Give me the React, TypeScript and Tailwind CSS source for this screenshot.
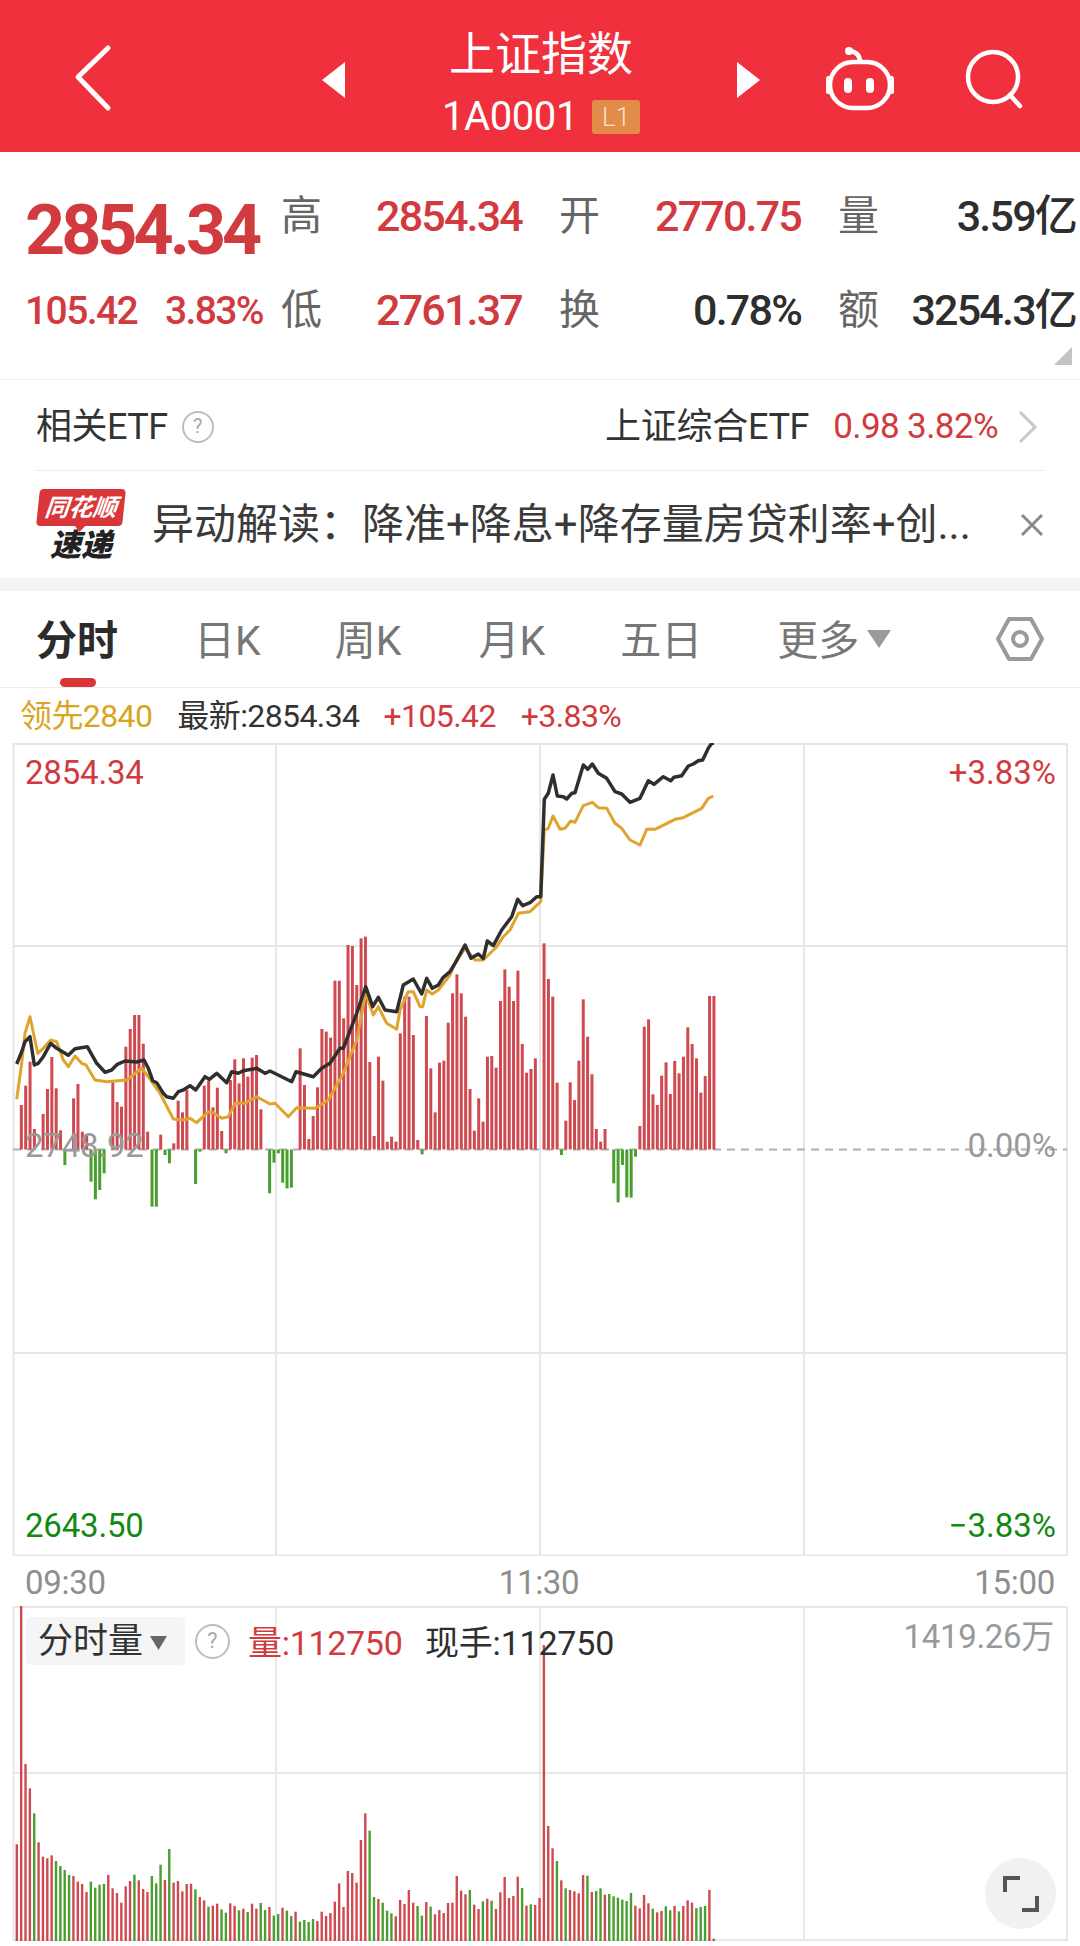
import React from "react";

const GREEN = "#4a9e30";

// bar tops, read off the reference in 3x pixels above y=740; below 1228 = red, above = green
const TICKS = [
  1095, 1037, 965, 1167, 1228, 1122, 1047, 951, 1045, 1171, 1275, 1228, 1075, 1032, 1175, 1185, 1325, 1378, 1350, 1300, 1228,
  1027, 1086, 1100, 920, 867, 825, 825, 911, 1175, 1400, 1400, 1184, 1245, 1270, 1210, 1082, 1117, 1050, 1228, 1332, 1235,
  1037, 1022, 1102, 1043, 1173, 1240, 1020, 958, 1030, 955, 1010, 953, 945, 1108, 1228, 1360, 1268, 1240, 1328, 1345, 1343,
  1228, 925, 1035, 1197, 1128, 1042, 867, 875, 893, 722, 722, 835, 615, 618, 735, 595, 590, 966, 1188, 950, 1022, 1205, 1190,
  1205, 880, 770, 770, 885, 1200, 1243, 828, 985, 1117, 968, 962, 848, 760, 703, 760, 830, 1047, 1172, 1075, 1145, 950, 948,
  983, 783, 688, 740, 783, 692, 912, 998, 987, 955, 1228, 610, 717, 770, 1028, 1245, 1142, 1027, 1080, 962, 778, 890, 1003,
  1167, 1205, 1167, 1228, 1330, 1387, 1275, 1372, 1373, 1250, 1158, 860, 838, 1063, 1095, 1007, 967, 1062, 963, 1000, 950,
  862, 912, 955, 1058, 1008, 768, 768,
];

// volume tops in 3x pixels below y=1740; g = green bar
const VOLUME = (
  "313 -405 72 145 220g 307 350 355 346 363g 378g 390g 405g 408 425 432 456 425g 443g 434g 432g 405 445 459 488 439 423 404g 421 447 456 " +
  "408g 430g 374g 420 327g 428 423 454 432 431 448g 471 481 500g 497 491 508g 518g 490 498 511g 506 516g 491 506 489g 510g 501 527g 522g " +
  "503 512g 528g 515 545g 540g 546g 537g 543 515 528 519 485 430 501 393 399 428 300 220 272g 471g 477 488g 512g 520g 529 480 492 450 488 " +
  "498g 527g 486 500g 523 510 519 489 488 408 452 463 450g 494 507 484g 476 482g 507 457 411 474 468 410 444g 497 493g 495 474 -285 258 " +
  "325 363g 421 445g 450 454 460 405 407g 456 453g 445g 464 462g 469g 473g 479g 483g 459g 497 505 465 490 506g 517 513 499g 511g 498 514g " +
  "498 481 488 504g 501g 498g 450 596"
).split(" ");

const BLACK_LINE =
  "50,972 65,935 75,905 90,890 103,975 115,970 130,950 152,910 170,925 205,946 225,926 262,920 290,970 315,997 335,990 352,973 375,963 410,966 432,960 445,985 458,1022 470,1028 490,1060 500,1070 520,1075 535,1055 550,1050 570,1037 587,1050 615,1010 628,1018 650,1000 680,1028 695,995 715,1000 730,992 770,985 795,1000 810,993 845,1010 875,1025 888,995 940,1010 965,985 990,970 1020,925 1030,925 1070,820 1097,740 1118,800 1135,772 1155,810 1190,815 1200,775 1210,735 1240,717 1265,762 1280,715 1297,745 1315,735 1330,712 1350,695 1365,670 1395,615 1413,655 1435,642 1450,655 1462,603 1480,617 1505,570 1535,530 1553,478 1568,497 1590,488 1610,470 1622,470 1633,178 1645,160 1659,105 1672,168 1690,170 1700,177 1715,160 1725,158 1750,75 1763,88 1777,72 1795,100 1820,115 1845,155 1865,162 1890,187 1920,175 1945,122 1962,133 1990,110 2012,122 2022,112 2045,107 2065,78 2080,72 2095,62 2108,60 2125,25 2135,10 2142,10";
const YELLOW_LINE =
  "50,1078 65,970 75,880 90,830 113,940 130,925 152,900 170,905 190,960 205,980 225,948 245,970 258,975 285,1020 320,1025 380,1020 425,985 445,1010 480,1060 520,1137 550,1140 570,1135 590,1148 625,1115 640,1118 665,1135 685,1130 705,1090 735,1090 770,1070 810,1092 825,1090 865,1130 890,1103 945,1105 985,1080 1030,1000 1070,900 1097,760 1120,825 1135,800 1160,850 1190,868 1200,810 1225,755 1240,755 1260,800 1268,800 1280,750 1297,762 1315,750 1350,705 1365,670 1395,625 1425,660 1450,660 1490,620 1510,590 1530,570 1555,520 1590,515 1622,485 1633,270 1645,265 1659,228 1680,268 1695,265 1712,243 1725,247 1750,197 1777,187 1795,203 1820,205 1845,250 1865,265 1890,300 1920,315 1940,268 1965,268 2025,238 2050,233 2105,205 2125,175 2140,168";

// the traced lines are in 3x pixels, same origin as TICKS
function scaled(points: string) {
  return points
    .split(" ")
    .map((p) => {
      const [x, y] = p.split(",").map(Number);
      return `${(x / 3).toFixed(1)},${(740 + y / 3).toFixed(1)}`;
    })
    .join(" ");
}

function HelpCircle({ size }: { size: number }) {
  return (
    <span
      className="flex shrink-0 items-center justify-center rounded-full border-2 border-[#bdbdbd] text-[#a8a8a8]"
      style={{ width: size, height: size, fontSize: size * 0.62 }}
    >
      ?
    </span>
  );
}

function Stat({ label, value, up }: { label: string; value: string; up?: boolean }) {
  return (
    <div className="flex items-center justify-between">
      <span className="text-[41px] leading-none text-[#666]">{label}</span>
      <span className={`text-[43px] font-medium leading-none tracking-[-1.8px] ${up ? "text-[#d13a3e]" : "text-[#2e2e2e]"}`}>
        {value}
      </span>
    </div>
  );
}

function Header() {
  return (
    <header className="relative flex h-[152px] items-center bg-[#f0303c] text-white">
      <svg width="44" height="70" viewBox="0 0 44 70" className="ml-[72px] mt-[5px] shrink-0" fill="none" stroke="currentColor" strokeWidth="5" strokeLinecap="round" strokeLinejoin="round">
        <path d="M36 4 6 33l30 31" />
      </svg>
      <svg width="24" height="36" viewBox="0 0 24 36" className="ml-[206px] mt-[8px] shrink-0" fill="currentColor">
        <path d="M23 0v36L0 18z" />
      </svg>
      <div className="flex w-[390px] shrink-0 flex-col items-center self-start pt-[27px]">
        <div className="text-[46px] leading-[54px]">上证指数</div>
        <div className="mt-[16px] flex items-center gap-[14px]">
          <span className="text-[40px] leading-[40px] tracking-[-0.4px]">1A0001</span>
          <span className="flex h-[34px] w-[48px] items-center justify-center rounded-[3px] bg-[#e18c48] text-[26px] font-light text-[#fbe3cc]">L1</span>
        </div>
      </div>
      <svg width="24" height="36" viewBox="0 0 24 36" className="mt-[8px] shrink-0" fill="currentColor">
        <path d="M1 0v36l23-18z" />
      </svg>
      <svg width="72" height="66" viewBox="0 0 72 66" className="ml-[64px] mt-[4px] shrink-0" fill="none" stroke="currentColor" strokeWidth="4.5" strokeLinecap="round">
        <rect x="6" y="17" width="60" height="46" rx="23" />
        <path d="M36 17c0-6-3-10-10-11" />
        <circle cx="25" cy="6" r="4" fill="currentColor" stroke="none" />
        <rect x="2" y="31" width="5" height="18" rx="2.5" fill="currentColor" stroke="none" />
        <rect x="65" y="31" width="5" height="18" rx="2.5" fill="currentColor" stroke="none" />
        <rect x="20" y="33" width="8" height="15" rx="4" fill="currentColor" stroke="none" />
        <rect x="42" y="33" width="8" height="15" rx="4" fill="currentColor" stroke="none" />
      </svg>
      <svg width="60" height="60" viewBox="0 0 60 60" className="ml-[68px] mt-[5px] shrink-0" fill="none" stroke="currentColor" strokeWidth="4.5" strokeLinecap="round">
        <circle cx="29" cy="28" r="25" />
        <path d="m46 46 10 11" />
      </svg>
    </header>
  );
}

function Quote() {
  return (
    <section className="relative flex h-[228px] items-start border-b border-[#eeeeee] pt-[41px]">
      <div className="w-[281px] shrink-0 pl-[25px] text-[#d13a3e]">
        <div className="mt-[2px] text-[70px] font-bold leading-[70px] tracking-[-4px]">2854.34</div>
        <div className="mt-[27px] flex justify-between pr-[18px] text-[39px] font-medium leading-none tracking-[-1.6px]">
          <span>105.42</span>
          <span>3.83%</span>
        </div>
      </div>
      <div className="grid w-[795px] grid-cols-[241px_242px_238px] gap-x-[37px] gap-y-[51px] pt-[2px]">
        <Stat label="高" value="2854.34" up />
        <Stat label="开" value="2770.75" up />
        <Stat label="量" value="3.59亿" />
        <Stat label="低" value="2761.37" up />
        <Stat label="换" value="0.78%" />
        <Stat label="额" value="3254.3亿" />
      </div>
      <svg width="18" height="18" viewBox="0 0 18 18" className="absolute bottom-[14px] right-[8px]">
        <path d="M18 0v18H0z" fill="#c4c4c4" />
      </svg>
    </section>
  );
}

function EtfRow() {
  return (
    <div className="mx-[36px] flex h-[91px] items-center border-b border-[#ececec] pt-[4px] text-[36px] text-[#333]">
      <span className="tracking-[-0.5px]">相关ETF</span>
      <span className="ml-[14px]">
        <HelpCircle size={32} />
      </span>
      <span className="ml-auto tracking-[-0.3px]">上证综合ETF</span>
      <span className="ml-[24px] text-[35px] tracking-[-0.6px] text-[#d13a3e]">0.98 3.82%</span>
      <svg width="20" height="34" viewBox="0 0 20 34" className="ml-[20px] mr-[6px] shrink-0" fill="none" stroke="#c8c8c8" strokeWidth="3">
        <path d="m2 2 15 15L2 32" />
      </svg>
    </div>
  );
}

function NewsRow() {
  return (
    <div className="flex h-[107px] items-center pl-[37px] pr-[36px]">
      <div className="flex w-[88px] shrink-0 flex-col items-center">
        <div className="relative flex h-[37px] w-[86px] -skew-x-6 items-center justify-center rounded-[4px] bg-[#d9363a] text-[24px] font-bold italic leading-none text-white">
          同花顺
          <span className="absolute -bottom-[6px] left-[38px] h-0 w-0 border-x-[6px] border-t-[7px] border-x-transparent border-t-[#d9363a]" />
        </div>
        <div className="mt-[5px] text-[31px] font-black italic leading-[30px] text-[#222]">速递</div>
      </div>
      <div className="ml-[27px] whitespace-nowrap text-[42px] leading-none text-[#3a3a3a]">
        异动解读：降准+降息+降存量房贷利率+创...
      </div>
      <svg width="24" height="24" viewBox="0 0 24 24" className="ml-auto shrink-0" fill="none" stroke="#8a8a8a" strokeWidth="3">
        <path d="m2 2 20 20M22 2 2 22" />
      </svg>
    </div>
  );
}

function Tabs() {
  return (
    <nav className="relative flex h-[97px] items-center border-b border-[#ececec] pt-[6px] text-[41px] text-[#777]">
      <span className="ml-[36px] font-bold text-[#2b2b2b]">分时</span>
      <span className="ml-[76px]">日K</span>
      <span className="ml-[74px]">周K</span>
      <span className="ml-[77px]">月K</span>
      <span className="ml-[75px]">五日</span>
      <span className="ml-[75px]">更多</span>
      <svg width="24" height="18" viewBox="0 0 24 18" className="-mt-[6px] ml-[8px] shrink-0" fill="#9a9a9a">
        <path d="M0 0h24L12 18z" />
      </svg>
      <svg width="48" height="46" viewBox="0 0 48 46" className="-mt-[6px] ml-auto mr-[36px] shrink-0" fill="none" stroke="#9a9a9a" strokeWidth="4" strokeLinejoin="round">
        <path d="M13 3h22l11 20-11 20H13L2 23z" />
        <circle cx="24" cy="23" r="7" />
      </svg>
      <span className="absolute bottom-0 left-[60px] h-[9px] w-[36px] rounded-[5px] bg-[#d9363a]" />
    </nav>
  );
}

function PriceChart() {
  const zero = 1149.5;
  return (
    <div className="relative h-[813px]">
      <svg width="1080" height="813" viewBox="0 743 1080 813" className="block" fill="none">
        <path d="M13.5 743v813M1067 743v813M276 743v813M540 743v813M804 743v813M13 744h1054M13 946h1054M13 1353h1054M13 1555.5h1054" stroke="#e6e6e6" strokeWidth="2" />
        <path d={`M13 ${zero}H1067`} stroke="#b0b0b0" strokeWidth="2" strokeDasharray="8 6" />
        {TICKS.map((top, i) => {
          const x = 21.33 + i * 4.356;
          const y = 740 + top / 3;
          if (top === 1228) return null;
          return top < 1228 ? (
            <rect key={i} x={x - 1.5} y={y} width="3" height={zero - y} fill="#cf4a50" />
          ) : (
            <rect key={i} x={x - 1.5} y={zero} width="3" height={y - zero} fill={GREEN} />
          );
        })}
        <polyline points={scaled(YELLOW_LINE)} stroke="#e0a32e" strokeWidth="3" strokeLinejoin="round" />
        <polyline points={scaled(BLACK_LINE)} stroke="#2f2f2f" strokeWidth="3.5" strokeLinejoin="round" />
      </svg>
      <span className="absolute left-[25px] top-[12px] text-[33px] leading-[36px] tracking-[-0.2px] text-[#d13a3e]">2854.34</span>
      <span className="absolute right-[24px] top-[12px] text-[33px] leading-[36px] text-[#d13a3e]">+3.83%</span>
      <span className="absolute left-[25px] top-[385px] text-[33px] leading-[36px] tracking-[-0.2px] text-[#9a9a9a]">2748.92</span>
      <span className="absolute right-[24px] top-[385px] text-[33px] leading-[36px] text-[#9a9a9a]">0.00%</span>
      <span className="absolute bottom-[12px] left-[25px] text-[33px] leading-[36px] tracking-[-0.2px] text-[#128a12]">2643.50</span>
      <span className="absolute bottom-[12px] right-[24px] text-[33px] leading-[36px] text-[#128a12]">−3.83%</span>
    </div>
  );
}

function VolumeChart() {
  const base = 1941;
  return (
    <div className="relative h-[340px]">
      <svg width="1080" height="340" viewBox="0 1606 1080 340" className="block" fill="none">
        <path d="M13.5 1606v335M1067 1606v335M276 1606v335M540 1606v335M804 1606v335M13 1607h1054M13 1773h1054M13 1940h1054" stroke="#e8e8e8" strokeWidth="2" />
        {VOLUME.map((v, i) => {
          const y = 1740 + parseFloat(v) / 3;
          const color = v.endsWith("g") ? GREEN : "#cf4a50";
          return <rect key={i} x={15.6 + i * 4.356} y={y} width="2.4" height={base - y} fill={color} />;
        })}
      </svg>
      <div className="absolute left-[26px] top-[11px] flex h-[48px] w-[159px] items-center rounded-[5px] bg-[#f5f5f5] pl-[12px] pt-[3px] text-[35px] text-[#333]">
        分时量
        <svg width="17" height="14" viewBox="0 0 17 14" className="ml-[7px] shrink-0" fill="#666">
          <path d="M0 0h17L8.5 14z" />
        </svg>
      </div>
      <span className="absolute left-[195px] top-[18px]">
        <HelpCircle size={35} />
      </span>
      <span className="absolute left-[248px] top-[17px] text-[34px] leading-[40px] tracking-[-0.3px] text-[#d13a3e]">量:112750</span>
      <span className="absolute left-[425px] top-[17px] text-[34px] leading-[40px] tracking-[-0.2px] text-[#2e2e2e]">现手:112750</span>
      <span className="absolute right-[26px] top-[12px] text-[33px] leading-[38px] tracking-[-0.3px] text-[#999]">1419.26万</span>
      <button className="absolute left-[985px] top-[252px] flex h-[71px] w-[71px] items-center justify-center rounded-full bg-[#f1f1f1]">
        <svg width="36" height="36" viewBox="0 0 36 36" fill="none" stroke="#555" strokeWidth="4">
          <path d="M2 16V2h15M34 20v14H19" />
        </svg>
      </button>
    </div>
  );
}

export default function App() {
  return (
    <div className="h-[1946px] w-[1080px] overflow-hidden bg-white font-[Roboto,'Noto_Sans_CJK_SC',sans-serif]">
      <Header />
      <Quote />
      <EtfRow />
      <NewsRow />
      <div className="h-[13px] bg-[#f3f3f3]" />
      <Tabs />
      <div className="flex h-[55px] items-center whitespace-nowrap pl-[20px] text-[32px] tracking-[-0.6px]">
        <span className="text-[#d9a520]">领先2840</span>
        <span className="ml-[25px] text-[#333]">最新:2854.34</span>
        <span className="ml-[24px] text-[#d13a3e]">+105.42</span>
        <span className="ml-[25px] text-[#d13a3e]">+3.83%</span>
      </div>
      <PriceChart />
      <div className="relative flex h-[50px] items-center justify-between px-[25px] pt-[4px] text-[33px] tracking-[-0.3px] text-[#8e8e8e]">
        <span>09:30</span>
        <span className="-ml-[2px]">11:30</span>
        <span>15:00</span>
      </div>
      <VolumeChart />
    </div>
  );
}
